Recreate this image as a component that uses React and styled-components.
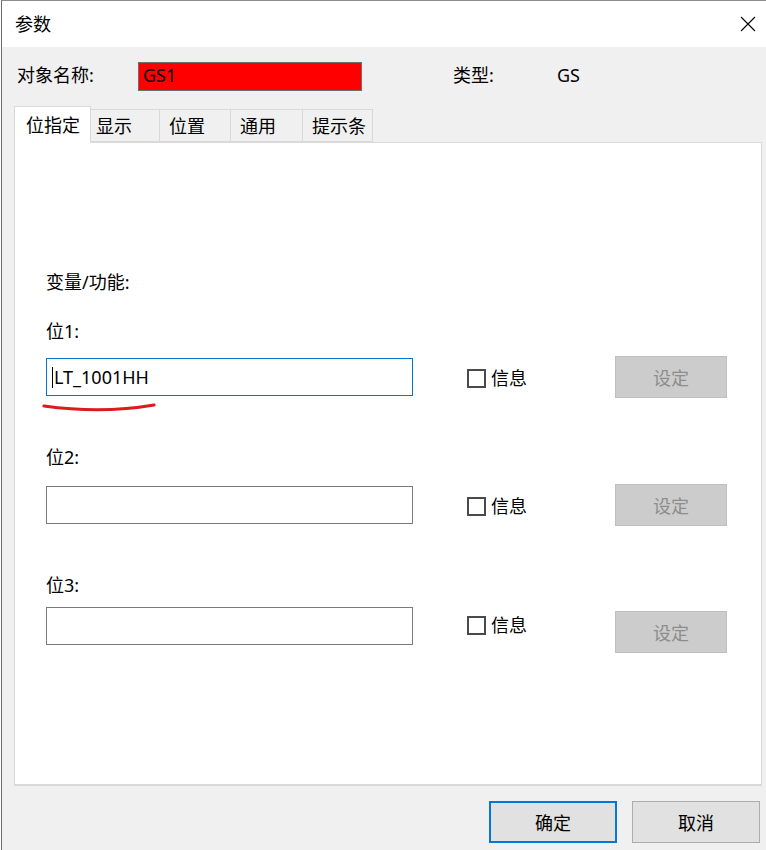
import styled, { createGlobalStyle } from 'styled-components';

const GlobalStyle = createGlobalStyle`
  html, body {
    margin: 0;
    padding: 0;
    background: #ffffff;
  }
  body {
    font-family: "Noto Sans", "Noto Sans CJK SC", sans-serif;
    font-size: 18px;
    color: #000;
  }
`;

const Window = styled.div`
  width: 765px;
  height: 850px;
  margin-left: 1px;
  border-left: 1px solid #6b6b6b;
  border-top: 1px solid #8c8c8c;
  box-sizing: border-box;
  display: flex;
  flex-direction: column;
  background: #f0f0f0;
  overflow: hidden;
`;

const TitleBar = styled.div`
  height: 46px;
  flex-shrink: 0;
  background: #fff;
  display: flex;
  align-items: center;
  justify-content: space-between;
  padding: 0 10px 0 13px;
`;

const Title = styled.span`
  font-size: 18px;
  line-height: 24px;
`;

const Body = styled.div`
  flex: 1;
  display: flex;
  flex-direction: column;
  padding: 0 4px 0 12px;
`;

const NameRow = styled.div`
  display: flex;
  align-items: center;
  height: 29px;
  margin-top: 15px;
  padding-left: 3px;
`;

const FieldLabel = styled.span`
  width: ${(p) => p.$w}px;
  flex-shrink: 0;
  line-height: 24px;
  margin-top: -3px;
`;

const NameBox = styled.div`
  width: 224px;
  height: 29px;
  box-sizing: border-box;
  border: 1px solid #6e6e6e;
  background: #ff0000;
  padding-left: 4px;
  line-height: 25px;
  margin-right: 91px;
`;

const TypeValue = styled.span`
  line-height: 24px;
  margin-top: -3px;
`;

const TabStrip = styled.div`
  display: flex;
  align-items: flex-end;
  height: 36px;
  margin-top: 15px;
  position: relative;
  z-index: 1;
`;

const Tab = styled.div`
  width: ${(p) => p.$w}px;
  box-sizing: border-box;
  height: ${(p) => (p.$active ? 37 : 33)}px;
  margin-bottom: ${(p) => (p.$active ? -1 : 0)}px;
  background: ${(p) => (p.$active ? '#fff' : '#f0f0f0')};
  border: 1px solid #d9d9d9;
  border-bottom: ${(p) => (p.$active ? 'none' : '1px solid #d9d9d9')};
  border-left: ${(p) => (p.$first || p.$active ? '1px solid #d9d9d9' : 'none')};
  display: flex;
  align-items: center;
  padding-left: ${(p) => p.$pad}px;
  line-height: 24px;
`;

const Panel = styled.div`
  position: relative;
  height: 644px;
  box-sizing: border-box;
  background: #fff;
  border: 1px solid #d9d9d9;
  border-bottom-width: 2px;
  padding: 127px 0 0 31px;
  display: flex;
  flex-direction: column;
`;

const Label = styled.div`
  line-height: 24px;
  margin-top: ${(p) => p.$gap || 0}px;
`;

const Row = styled.div`
  display: flex;
  align-items: flex-start;
  margin-top: ${(p) => p.$gap}px;
`;

const TextBox = styled.div`
  width: 367px;
  height: 38px;
  box-sizing: border-box;
  margin-top: ${(p) => p.$top}px;
  border: 1px solid ${(p) => (p.$focused ? '#0078d7' : '#7a7a7a')};
  background: #fff;
  display: flex;
  align-items: center;
  padding-left: 5px;
`;

const Caret = styled.span`
  width: 1px;
  height: 21px;
  background: #000;
  margin-right: 1px;
`;

const Check = styled.label`
  display: flex;
  align-items: center;
  gap: 5px;
  width: 148px;
  margin-left: 54px;
  margin-top: ${(p) => p.$top}px;
  line-height: 24px;
`;

const Box = styled.span`
  width: 19px;
  height: 19px;
  box-sizing: border-box;
  border: 2px solid #4a4a4a;
  background: #fff;
`;

const SetButton = styled.div`
  width: 112px;
  height: 42px;
  box-sizing: border-box;
  margin-top: ${(p) => p.$top}px;
  background: #cccccc;
  border: 1px solid #bfbfbf;
  color: #8d8d8d;
  display: flex;
  align-items: center;
  justify-content: center;
`;

const Underline = styled.svg`
  position: absolute;
  left: 25px;
  top: 257px;
  pointer-events: none;
`;

const Footer = styled.div`
  display: flex;
  justify-content: flex-end;
  gap: 15px;
  margin-top: 15px;
  margin-right: 2px;
`;

const DialogButton = styled.div`
  width: 128px;
  height: 42px;
  box-sizing: border-box;
  background: #e1e1e1;
  border: ${(p) => (p.$primary ? '2px solid #0078d7' : '1px solid #adadad')};
  display: flex;
  align-items: center;
  justify-content: center;
`;

const CloseIcon = () => (
  <svg width="16" height="16" viewBox="0 0 16 16">
    <path d="M1 1 L15 15 M15 1 L1 15" stroke="#000" strokeWidth="1.1" fill="none" />
  </svg>
);

const bits = [
  { label: '位1:', labelGap: 25, rowGap: 13, value: 'LT_1001HH', focused: true, input: 2, check: 10, button: 0 },
  { label: '位2:', labelGap: 47, rowGap: 15, value: '', input: 2, check: 10, button: 0 },
  { label: '位3:', labelGap: 47, rowGap: 10, value: '', input: 0, check: 6, button: 4 },
];

const tabs = [
  { name: '位指定', w: 77, pad: 11, active: true },
  { name: '显示', w: 69, pad: 5 },
  { name: '位置', w: 71, pad: 9 },
  { name: '通用', w: 72, pad: 9 },
  { name: '提示条', w: 70, pad: 9 },
];

const App = () => {
  return (
    <>
      <GlobalStyle />
      <Window>
        <TitleBar>
          <Title>参数</Title>
          <CloseIcon />
        </TitleBar>
        <Body>
          <NameRow>
            <FieldLabel $w={121}>对象名称:</FieldLabel>
            <NameBox>GS1</NameBox>
            <FieldLabel $w={104}>类型:</FieldLabel>
            <TypeValue>GS</TypeValue>
          </NameRow>

          <TabStrip>
            {tabs.map((t, i) => (
              <Tab key={t.name} $w={t.w} $pad={t.pad} $active={t.active} $first={i === 0}>
                {t.name}
              </Tab>
            ))}
          </TabStrip>

          <Panel>
            <Label>变量/功能:</Label>
            {bits.map((b) => (
              <div key={b.label}>
                <Label $gap={b.labelGap}>{b.label}</Label>
                <Row $gap={b.rowGap}>
                  <TextBox $top={b.input} $focused={b.focused}>
                    {b.focused && <Caret />}
                    {b.value}
                  </TextBox>
                  <Check $top={b.check}>
                    <Box />
                    信息
                  </Check>
                  <SetButton $top={b.button}>设定</SetButton>
                </Row>
              </div>
            ))}
            <Underline width="124" height="16" viewBox="0 0 124 16">
              <path d="M4 6 Q62 14 114 5" stroke="#dc1c1c" strokeWidth="3.2" strokeLinecap="round" fill="none" />
            </Underline>
          </Panel>

          <Footer>
            <DialogButton $primary>确定</DialogButton>
            <DialogButton>取消</DialogButton>
          </Footer>
        </Body>
      </Window>
    </>
  );
};

export default App;
